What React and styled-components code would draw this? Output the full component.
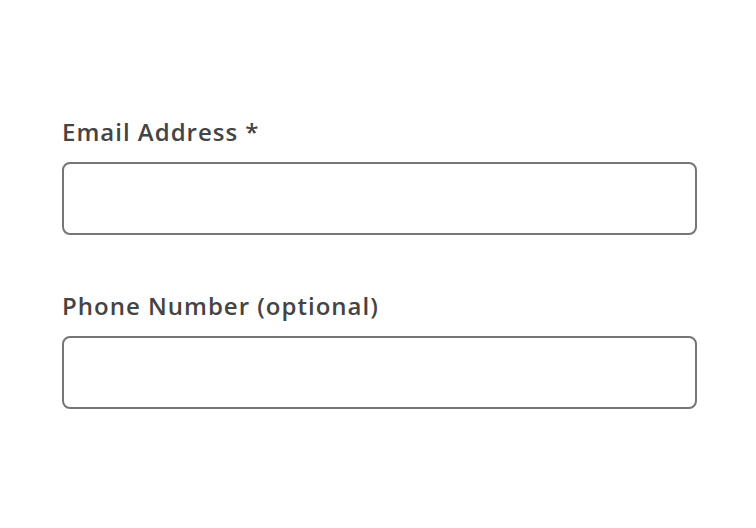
import React from "react";
import styled, { createGlobalStyle } from "styled-components";

const GlobalStyle = createGlobalStyle`
  body {
    margin: 0;
    background: #ffffff;
    font-family: "Open Sans", "Liberation Sans", sans-serif;
  }
`;

const StyledForm = styled.form`
  display: flex;
  flex-direction: column;
  gap: 55px;
  padding: 116px 59px 0 62px;
`;

const StyledField = styled.div`
  display: flex;
  flex-direction: column;
  gap: 14px;
`;

const StyledLabel = styled.label`
  font-size: 24px;
  line-height: 32px;
  font-weight: 600;
  letter-spacing: 1px;
  color: #444444;
`;

const StyledInput = styled.input`
  box-sizing: border-box;
  width: 100%;
  height: 73px;
  border: 2px solid #767676;
  border-radius: 8px;
  padding: 0 16px;
  font-family: inherit;
  font-size: 20px;
  background: #ffffff;
  outline: none;
`;

const App = () => {
  return (
    <>
      <GlobalStyle />
      <StyledForm onSubmit={(e) => e.preventDefault()}>
        <StyledField>
          <StyledLabel htmlFor="email">Email Address *</StyledLabel>
          <StyledInput id="email" type="email" />
        </StyledField>
        <StyledField>
          <StyledLabel htmlFor="phone">Phone Number (optional)</StyledLabel>
          <StyledInput id="phone" type="tel" />
        </StyledField>
      </StyledForm>
    </>
  );
};

export default App;
